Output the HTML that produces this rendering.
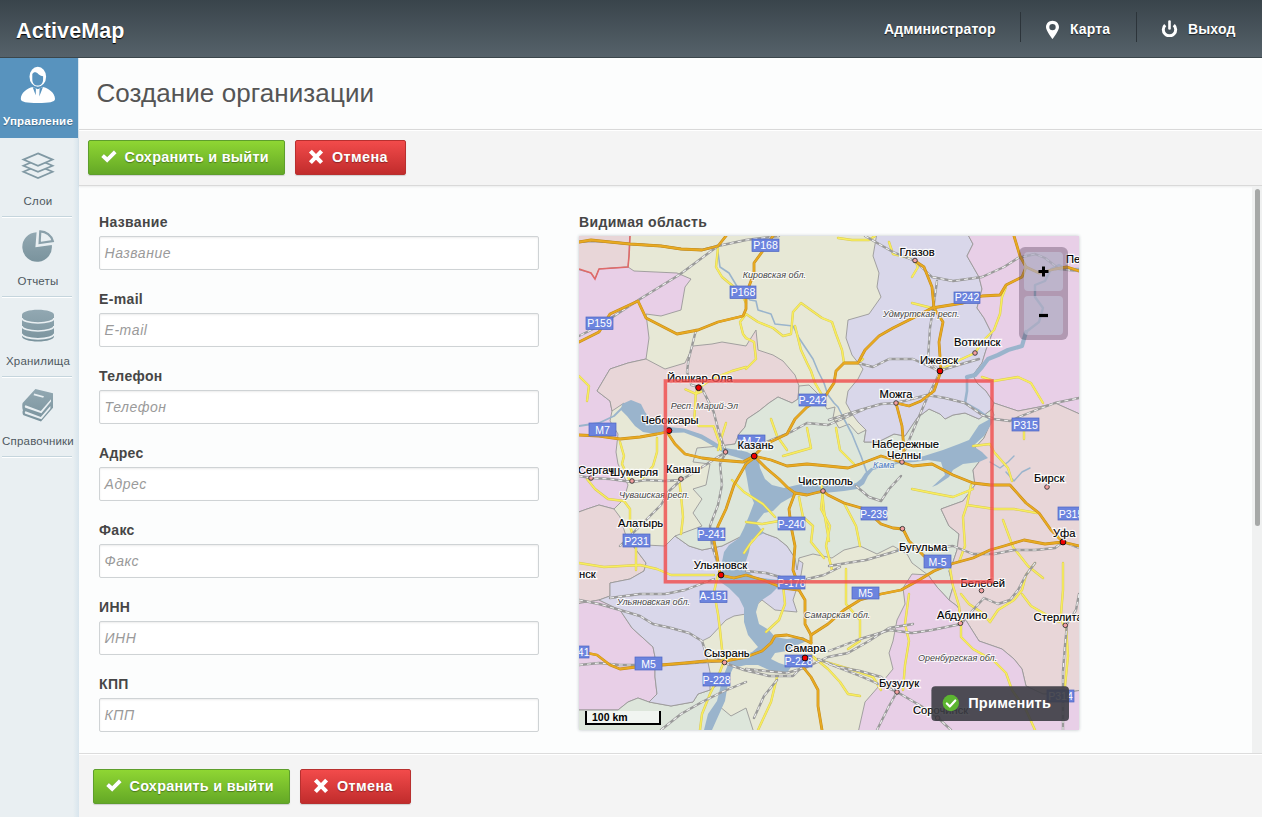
<!DOCTYPE html>
<html><head><meta charset="utf-8">
<style>
*{box-sizing:border-box;margin:0;padding:0}
html,body{width:1262px;height:817px;overflow:hidden;background:#fcfdfd;font-family:"Liberation Sans",sans-serif}
.abs{position:absolute}
#hdr{position:absolute;left:0;top:0;width:1262px;height:58px;background:linear-gradient(#39444b,#56626a 57px,#3b464b 57px);z-index:2}
#logo{position:absolute;left:16px;top:18px;letter-spacing:0.12px;font-weight:bold;font-size:21.5px;color:#fff;text-shadow:0 1px 1px #000;white-space:nowrap;line-height:26px}
.hl{position:absolute;top:23px;letter-spacing:0.15px;font-weight:bold;font-size:14px;color:#fff;text-shadow:0 1px 1px #1a1f23;white-space:nowrap;line-height:12px}
.sep{position:absolute;top:12px;width:1px;height:30px;background:#2c343a}
#side{position:absolute;left:0;top:58px;width:79px;height:759px;background:linear-gradient(to right,#e9eff2 0,#e9eff2 73px,#d8e5ed 79px)}
.sitem{position:absolute;left:0;width:76px;height:80px}
.stxt{position:absolute;left:0;width:76px;text-align:center;font-size:11.5px;letter-spacing:0.2px;color:#4e5860;white-space:nowrap;line-height:12px}
.sline{position:absolute;left:2px;width:70px;height:1px;background:#c5d5dd;box-shadow:0 1px 0 #fff}
#title{position:absolute;left:96.5px;top:79px;letter-spacing:0.08px;font-size:26px;color:#555;white-space:nowrap;line-height:28px}
.tb{position:absolute;left:79px;width:1183px;background:#f4f4f4;box-shadow:inset 0 1px 0 #fff}
.btn{position:absolute;height:35px;border-radius:2px;color:#fff;font-weight:bold;font-size:14.4px;text-shadow:0 1px 1px rgba(0,0,0,.35);white-space:nowrap;box-shadow:0 1px 1px rgba(0,0,0,.15)}
.g{background:linear-gradient(#8fd633,#64a826);border:1px solid #5e9e2c}
.r{background:linear-gradient(#f24b4b,#c12c2c);border:1px solid #b8302f}
.btn span{position:absolute;top:9px;letter-spacing:0.27px;line-height:14px}
.lbl{position:absolute;left:99px;letter-spacing:0.35px;font-weight:bold;font-size:14px;color:#464646;white-space:nowrap;line-height:14px}
.inp{position:absolute;left:99px;width:440px;height:34px;background:#fff;border:1px solid #cfd3d5;border-radius:2px;box-shadow:inset 0 1px 2px rgba(0,0,0,.08)}
.inp span{position:absolute;left:4.5px;letter-spacing:0.55px;top:9px;font-style:italic;font-size:14px;color:#9a9a9a;line-height:14px;white-space:nowrap}
#map{position:absolute;left:579px;top:236px;width:500px;height:494px;overflow:hidden;background:#e9e8d9;box-shadow:0 0 3px rgba(40,60,70,.3)}
#sb{position:absolute;left:1252px;top:186px;width:10px;height:567px;background:#f0f1f1}
#thumb{position:absolute;left:1255px;top:189px;width:5px;height:337px;background:#a6a8a7;border-radius:3px}
</style></head><body>
<div id="hdr">
  <div id="logo">ActiveMap</div>
  <div class="hl" style="left:884px">Администратор</div>
  <div class="sep" style="left:1020px"></div>
  <svg class="abs" style="left:1045px;top:20px" width="15" height="20" viewBox="0 0 15 20"><path d="M7.5 0.8C3.8 0.8 1 3.6 1 7.2c0 3.6 6.5 11.8 6.5 11.8S14 10.8 14 7.2C14 3.6 11.2 0.8 7.5 0.8z M7.5 3.9a3.2 3.2 0 1 1 0 6.4a3.2 3.2 0 1 1 0-6.4z" fill="#fff" fill-rule="evenodd"/></svg>
  <div class="hl" style="left:1070px">Карта</div>
  <div class="sep" style="left:1136px"></div>
  <svg class="abs" style="left:1160px;top:19px" width="19" height="18" viewBox="0 0 19 18"><path d="M5.2 6.2A6.2 6.2 0 1 0 13.8 6.2" fill="none" stroke="#fff" stroke-width="3"/><line x1="9.5" y1="2.5" x2="9.5" y2="9.5" stroke="#fff" stroke-width="2.6" stroke-linecap="round"/></svg>
  <div class="hl" style="left:1188px">Выход</div>
</div>

<div id="side">
  <div class="sitem" style="top:0;width:78px;background:#5893be"></div>
  <svg class="abs" style="left:16px;top:4px" width="44" height="44" viewBox="0 0 44 44">
    <ellipse cx="21.8" cy="14.8" rx="8.3" ry="10" fill="#fff"/>
    <path d="M16.3 12.2C17.6 9.6 20.2 9.8 22.5 12.2C24 13.6 25.8 14 27.1 14.2L27.1 17.2C27.1 21.2 24.9 23.6 21.7 23.6C18.5 23.6 16.3 21.2 16.3 17.2Z" fill="#5893be"/>
    <path d="M4.8 37C4.8 31 11 26.3 16.8 25.1L21.8 27.2L26.8 25.1C32.6 26.3 39 31 39 37C39 40 33 41 21.9 41C10.8 41 4.8 40 4.8 37Z" fill="#fff"/>
    <path d="M16.6 25L19.9 26.6L19.7 33.2Z M27 25L23.6 26.6L23.3 34.6Z" fill="#5893be"/>
  </svg>
  <svg class="abs" style="left:18px;top:90px" width="40" height="32" viewBox="0 0 40 32">
    <g fill="#e9eff2" stroke="#8199a4" stroke-width="1.7" stroke-linejoin="miter">
    <path d="M20 17.6L34.6 23.8L20 30L5.4 23.8Z"/>
    <path d="M20 11.5L34.6 17.7L20 23.9L5.4 17.7Z"/>
    <path d="M20 5.4L34.6 11.6L20 17.8L5.4 11.6Z"/>
    </g>
  </svg>
  <svg class="abs" style="left:18px;top:168px" width="40" height="40" viewBox="0 0 40 40">
    <defs><linearGradient id="sg" x1="0" y1="0" x2="0" y2="1"><stop offset="0" stop-color="#92a8b2"/><stop offset="1" stop-color="#7a939d"/></linearGradient></defs>
    <path d="M17.4 21.3L18.6 6.2A14.8 14.8 0 1 0 33.8 19.1Z" fill="url(#sg)"/>
    <path d="M21.6 17L22.3 5.4A13.2 13.2 0 0 1 34.8 15Z" fill="none" stroke="#8aa0aa" stroke-width="2.2" stroke-linejoin="miter"/>
  </svg>
  <svg class="abs" style="left:18px;top:248px" width="40" height="40" viewBox="0 0 40 40">
    <path d="M4 8.8C4 6 11 3.8 20 3.8C29 3.8 36 6 36 8.8L36 30.6C36 33.4 29 35.6 20 35.6C11 35.6 4 33.4 4 30.6Z" fill="url(#sg)"/>
    <g fill="none" stroke="#e9eff2" stroke-width="1.7">
    <path d="M4 12C4 14.8 11 17 20 17C29 17 36 14.8 36 12"/>
    <path d="M4 20C4 22.8 11 25 20 25C29 25 36 22.8 36 20"/>
    <path d="M4 27.8C4 30.6 11 32.8 20 32.8C29 32.8 36 30.6 36 27.8"/>
    </g>
  </svg>
  <svg class="abs" style="left:18px;top:326px" width="40" height="40" viewBox="0 0 40 40">
    <path d="M4.6 19L17.4 4.9L35 9.3L35 23.8L23 37.6L6.3 31.6C4.3 30.8 4.2 27.4 5 26.2C4.2 25 4.1 20.4 4.6 19Z" fill="url(#sg)"/>
    <path d="M7.6 21.3L22.8 27L33 15.2L33 17.6L23.4 29.2L7.4 23.8C6.6 23.3 6.6 21.6 7.6 21.3Z" fill="#e9eff2"/>
    <path d="M7.6 27.2L22.8 33L32.4 22L32.4 24.4L23.4 35.2L7.4 29.8C6.6 29.3 6.6 27.6 7.6 27.2Z" fill="#e9eff2"/>
    <path d="M16.2 9.6L26 12.2L25.2 13.8L15.6 11.2Z" fill="#e9eff2"/>
  </svg>
  <div class="stxt" style="top:57px;color:#fff;font-weight:bold;text-shadow:0 1px 1px rgba(0,0,0,.3)">Управление</div>
  <div class="stxt" style="top:137px">Слои</div>
  <div class="sline" style="top:158px"></div>
  <div class="stxt" style="top:217px">Отчеты</div>
  <div class="sline" style="top:238px"></div>
  <div class="stxt" style="top:297px">Хранилища</div>
  <div class="sline" style="top:318px"></div>
  <div class="stxt" style="top:377px">Справочники</div>
  <div class="sline" style="top:398px"></div>
</div>

<div id="title">Создание организации</div>

<div class="tb" style="top:129px;height:57px;border-top:1px solid #d9d9d9;border-bottom:1px solid #d9d9d9;box-shadow:inset 0 1px 0 #fff,0 1px 2px rgba(0,0,0,.07)"></div>
<div class="btn g" style="left:88px;top:140px;width:197px"><span style="left:35.5px">Сохранить и выйти</span></div>
<div class="btn r" style="left:295px;top:140px;width:111px"><span style="left:36px;letter-spacing:0.4px">Отмена</span></div>

<svg class="abs" style="left:0px;top:140px" width="1262" height="40" viewBox="0 140 1262 40" overflow="visible"><path d="M103.9 154L107.2 156.9L113.9 150.3L116.7 153.2L107.2 162.8L101.1 157Z" fill="#fff" stroke="rgba(40,90,10,.25)" stroke-width="0.6"/><path d="M310.4 151.1L321.6 162.6M321.6 151.1L310.4 162.6" stroke="#fff" stroke-width="4.1"/></svg>
<div class="lbl" style="top:215px">Название</div>
<div class="inp" style="top:236px"><span>Название</span></div>
<div class="lbl" style="top:292px">E-mail</div>
<div class="inp" style="top:313px"><span>E-mail</span></div>
<div class="lbl" style="top:369px">Телефон</div>
<div class="inp" style="top:390px"><span>Телефон</span></div>
<div class="lbl" style="top:446px">Адрес</div>
<div class="inp" style="top:467px"><span>Адрес</span></div>
<div class="lbl" style="top:523px">Факс</div>
<div class="inp" style="top:544px"><span>Факс</span></div>
<div class="lbl" style="top:600px">ИНН</div>
<div class="inp" style="top:621px"><span>ИНН</span></div>
<div class="lbl" style="top:677px">КПП</div>
<div class="inp" style="top:698px"><span>КПП</span></div>

<div class="lbl" style="left:579px;top:215px">Видимая область</div>
<div id="map"><!--MAP--><svg width="500" height="494" viewBox="0 0 500 494" font-family="Liberation Sans">
<rect width="500" height="494" fill="#e7e8d6"/>
<g stroke="#9a9898" stroke-width="0.9" stroke-linejoin="round">
<path fill="#e8d6d8" d="M-3 -3L51 -3L50 20L49 31L20 33L16 43L12 37L-3 33Z"/>
<path fill="#e8cfe7" d="M-3 33L12 37L16 43L20 33L49 31L55 35L98 37L112 43L106 51L102 74L82 80L67 78L68 86L70 102L67 123L49 127L31 133L18 155L31 165L33 175L31 185L39 198L37 216L39 228L49 249L45 263L35 273L20 269L8 273L-3 277Z"/>
<path fill="#e8d6d8" d="M18 155L31 133L49 127L67 123L86 133L106 127L114 110L133 108L143 106L167 110L177 94L179 114L194 119L204 125L216 139L220 150L219 163L213 167L199 161L190 167L180 175L168 183L166 191L160 198L156 208L141 210L133 208L119 198L102 194L86 192L78 194L61 192L53 179L45 167L33 175L31 165Z"/>
<path fill="#e8d6d8" d="M-3 277L8 273L20 269L35 273L41 281L47 300L55 311L67 327L65 335L51 343L31 347L31 360L20 364L-3 368Z"/>
<path fill="#e8cfe7" d="M-3 368L20 364L41 374L53 392L74 411L76 421L76 441L78 458L70 466L59 462L49 466L39 474L-3 474Z"/>
<path fill="#dde6db" d="M-3 474L39 474L49 466L59 462L70 466L92 470L114 466L119 458L131 454L143 446L140 470L152 480L167 472L175 497L-3 497Z"/>
<path fill="#d9d7ea" d="M47 308L86 310L96 300L110 310L123 314L143 310L167 298L179 294L187 298L198 302L208 310L216 322L224 327L222 339L214 364L218 376L196 374L183 364L167 378L155 380L147 384L131 401L123 405L127 417L131 436L131 454L119 458L114 466L92 470L70 466L78 458L76 441L76 421L74 411L53 392L41 374L20 364L31 360L31 347L51 343L65 335L67 327L55 311Z"/>
<path fill="#dde6db" d="M118 212L141 210L156 208L160 198L166 191L168 183L180 175L190 167L199 161L213 167L219 163L220 150L230 149L240 159L248 173L256 171L254 182L260 192L270 188L279 198L287 194L285 206L299 206L315 198L326 200L338 182L350 173L361 178L366 183L374 179L386 177L400 183L413 173L415 179L405 202L394 214L400 226L394 234L396 249L384 265L362 273L370 290L380 298L378 314L374 326L370 335L374 351L370 364L358 351L349 339L333 327L328 318L314 310L298 318L281 310L265 314L253 322L234 318L220 322L218 334L216 322L208 310L198 302L187 298L179 294L167 298L143 310L123 314L110 310L96 300L123 290L114 277L123 263L114 253L127 249L131 228L114 226Z"/>
<path fill="#d9d7ea" d="M298 -3L388 -3L394 8L388 20L400 41L403 53L398 72L405 82L413 98L407 114L403 127L394 139L398 147L407 155L415 167L413 173L400 183L386 177L374 179L366 183L361 178L350 173L338 182L326 200L315 198L299 206L285 206L287 194L279 186L273 178L267 167L269 155L279 143L284 133L273 119L267 102L269 84L290 78L302 61L298 51L300 37L294 20Z"/>
<path fill="#e8cfe7" d="M388 -3L503 -3L503 179L476 167L460 171L439 175L415 167L407 155L398 147L394 139L403 127L407 114L413 98L405 82L398 72L403 53L400 41L388 20L394 8Z"/>
<path fill="#e8d6d8" d="M415 167L439 175L460 171L476 167L503 179L503 454L480 458L464 458L447 450L443 433L435 423L423 413L400 405L388 386L378 370L370 364L374 351L370 335L374 326L378 314L380 298L370 290L362 273L384 265L396 249L394 234L400 226L394 214L405 202L415 179L413 173Z"/>
<path fill="#e8cfe7" d="M279 497L286 466L300 450L314 433L310 417L314 405L318 384L326 368L324 352L333 338L349 339L358 351L370 364L378 370L388 386L400 405L423 413L435 423L443 433L447 450L464 458L480 458L503 454L503 497Z"/>
</g>
<path fill="none" stroke="#e06a6a" stroke-width="1.6" d="M51 0L50 20L49 31L20 33L16 43L12 37L0 33"/>
<g fill="#9ab4cc"><path d="M43 168L52 164L62 168L66 176L72 184L80 188L90 191L105 192.5L123 198.5L135 205.5L144 211.5L152 213L160 214L168 216L176 220L170 226L160 222L150 219L143 216L134 210L122 203L105 196.5L90 197L76 198L64 196L56 190L48 180L42 174Z"/><path d="M168 219L165 228L168 243L170 255L175 267L170 280L165 292L160 302L150 309L145 316L143 326L143 336L140 345L150 352L160 362L165 372L165 386L169 399L179 411L173 416L163 420L150 426L146 436L142 449L138 465L129 478L125 494L133 494L146 465L150 441L154 432L167 429L179 429L192 435L208 437L212 431L200 427L192 423L196 417L208 415L218 409L228 405L224 401L208 403L196 401L190 394L180 388L177 376L180 366L192 358L200 350L199 344L175 341L165 331L170 316L172 304L185 297L177 287L185 277L194 275L202 267L209 263L216 259L224 259L245 257L265 255L278 253L285 248L289 240L294 234L306 231L322 227L336 226L349 224L362 226L366 239L353 251L358 249L370 241L374 234L384 228L400 226L409 222L403 216L394 210L405 200L413 187L415 179L411 183L400 189L390 204L380 208L364 214L345 220L336 222L322 225L306 229L292 232L286 237L282 243L277 247L269 249L249 249L228 247L218 249L205 252L193 249L186 243L181 232L180 226L176 222Z"/></g>
<g fill="none" stroke="#9ab4cc" stroke-linecap="round" stroke-linejoin="round"><path stroke-width="1.6" d="M138 9L141 31L150 37L159 52L167 60L171 64L177 65L179 74L192 78L196 88L214 90L220 102L228 114L234 123L239 135L245 147L249 159L255 167L259 171L265 183L273 198L277 208L282 220L288 237"/><path stroke-width="2.4" d="M500 33L488 33L480 29L472 33L466 45L456 49L456 61L464 72L460 86L447 96"/><path stroke-width="4.2" d="M447 96L443 110L429 114L419 119L409 123L403 131L396 139L388 141"/><path stroke-width="2.6" d="M388 141L388 155L386 167L400 175L411 183"/><path stroke-width="1.4" d="M411 226L421 232L429 226L435 220"/><path stroke-width="1.4" d="M427 236L435 245L443 236L451 232"/><path stroke-width="1.8" d="M0 190L20 187L35 180L43 172"/></g>
<g fill="none" stroke-linecap="round" stroke-linejoin="round">
<path stroke="#d8c858" stroke-width="2.4" d="M139 12L137 31L143 41L155 51L164 61L167 67"/>
<path stroke="#d8c858" stroke-width="2.4" d="M167 78L179 86L194 92L204 100L212 98L214 76L222 67L243 82L253 86L257 98L263 114L265 127L279 127L284 123"/>
<path stroke="#d8c858" stroke-width="2.4" d="M216 90L222 114L228 127L232 135L236 147L243 159"/>
<path stroke="#d8c858" stroke-width="2.4" d="M259 2L273 4L290 4L296 0"/>
<path stroke="#d8c858" stroke-width="2.4" d="M310 6L314 18L331 22"/>
<path stroke="#d8c858" stroke-width="2.4" d="M167 102L175 106L177 123L167 133"/>
<path stroke="#d8c858" stroke-width="2.4" d="M167 78L161 86L164 98L167 102"/>
<path stroke="#d8c858" stroke-width="2.4" d="M119 151L116.8 157.8L115.4 182.8L119.8 190.1L134.5 190.1L140.3 206.3L141.8 213.6"/>
<path stroke="#d8c858" stroke-width="2.4" d="M106.5 153.4L116.8 157.8L124.2 154.8"/>
<path stroke="#d8c858" stroke-width="2.4" d="M121 151L133 143L153 135L167 131"/>
<path stroke="#d8c858" stroke-width="2.4" d="M360 135L374 127L396 117L403 106L415 94L421 78L423 61L427 51"/>
<path stroke="#d8c858" stroke-width="2.4" d="M403 141L415 145L439 141L452 147L464 167"/>
<path stroke="#d8c858" stroke-width="2.4" d="M333 41L339 31L336 25"/>
<path stroke="#d8c858" stroke-width="2.4" d="M333 67L345 70L353 72"/>
<path stroke="#d8c858" stroke-width="2.4" d="M41 206L45 220L43 228L51 245"/>
<path stroke="#d8c858" stroke-width="2.4" d="M78 202L78 216L74 230L61 245"/>
<path stroke="#d8c858" stroke-width="2.4" d="M100 243L102 259L104 281L102 298"/>
<path stroke="#d8c858" stroke-width="2.4" d="M8 243L16 253L29 263L45 265L51 273L51 290L57 310L57 334"/>
<path stroke="#d8c858" stroke-width="2.4" d="M147 187L143 200L139 214"/>
<path stroke="#d8c858" stroke-width="2.4" d="M192 183L198 200L208 214"/>
<path stroke="#d8c858" stroke-width="2.4" d="M228 192L232 212L218 216L204 220"/>
<path stroke="#d8c858" stroke-width="2.4" d="M257 192L261 214L275 228"/>
<path stroke="#d8c858" stroke-width="2.4" d="M220 261L224 281L234 290L232 306L245 322"/>
<path stroke="#d8c858" stroke-width="2.4" d="M244 255L242 273L251 290L247 310L253 334"/>
<path stroke="#d8c858" stroke-width="2.4" d="M265 267L277 290L281 310"/>
<path stroke="#d8c858" stroke-width="2.4" d="M167 286L183 288L200 285"/>
<path stroke="#d8c858" stroke-width="2.4" d="M394 210L411 208L415 216L429 232L433 245"/>
<path stroke="#d8c858" stroke-width="2.4" d="M392 249L388 269L384 281L386 310L380 326"/>
<path stroke="#d8c858" stroke-width="2.4" d="M388 269L415 273L435 273L458 277"/>
<path stroke="#d8c858" stroke-width="2.4" d="M333 253L353 257L374 261L394 253"/>
<path stroke="#d8c858" stroke-width="2.4" d="M445 194L445 203"/>
<path stroke="#d8c858" stroke-width="2.4" d="M139 339L135 356L139 378L141 394L143 413L145 425"/>
<path stroke="#d8c858" stroke-width="2.4" d="M0 327L25 331L61 329L78 333L92 339L114 339L135 339"/>
<path stroke="#d8c858" stroke-width="2.4" d="M145 425L139 441L131 458L123 478L121 494"/>
<path stroke="#d8c858" stroke-width="2.4" d="M204 349L206 368L200 384L187 396"/>
<path stroke="#d8c858" stroke-width="2.4" d="M267 333L267 368L281 384L281 405L269 413"/>
<path stroke="#d8c858" stroke-width="2.4" d="M232 419L249 433L261 446L269 458L281 460"/>
<path stroke="#d8c858" stroke-width="2.4" d="M236 423L257 429L277 435L294 441L302 454"/>
<path stroke="#d8c858" stroke-width="2.4" d="M324 454L326 429L330 405L326 388L330 358"/>
<path stroke="#d8c858" stroke-width="2.4" d="M198 441L192 466L179 494"/>
<path stroke="#d8c858" stroke-width="2.4" d="M382 388L382 401L394 413L415 425L427 437L433 454L447 474L456 494"/>
<path stroke="#d8c858" stroke-width="2.4" d="M382 358L390 368L402 376L411 386"/>
<path stroke="#d8c858" stroke-width="2.4" d="M411 386L419 374L435 364L443 354L447 339L456 327"/>
<path stroke="#d8c858" stroke-width="2.4" d="M443 358L452 370L466 378L480 386"/>
<path stroke="#d8c858" stroke-width="2.4" d="M484 327L484 354L482 378L484 388"/>
<path stroke="#d8c858" stroke-width="2.4" d="M370 327L374 350L380 370L382 388"/>
<path stroke="#d8c858" stroke-width="2.4" d="M424 284L434 311L449 330L464 342"/>
<path stroke="#d8c858" stroke-width="2.4" d="M153 244L165 256L184 268L196 281"/>
<path stroke="#d8c858" stroke-width="2.4" d="M184 293L171 308L165 317"/>
<path stroke="#d8c858" stroke-width="2.4" d="M242 244L245 275L250 305"/>
<path stroke="#d8c858" stroke-width="2.4" d="M487 390L489 420L486 450"/>
<path stroke="#d8c858" stroke-width="2.4" d="M0 140L10 150L8 165"/>
<path stroke="#f8ee5e" stroke-width="1.5" d="M139 12L137 31L143 41L155 51L164 61L167 67"/>
<path stroke="#f8ee5e" stroke-width="1.5" d="M167 78L179 86L194 92L204 100L212 98L214 76L222 67L243 82L253 86L257 98L263 114L265 127L279 127L284 123"/>
<path stroke="#f8ee5e" stroke-width="1.5" d="M216 90L222 114L228 127L232 135L236 147L243 159"/>
<path stroke="#f8ee5e" stroke-width="1.5" d="M259 2L273 4L290 4L296 0"/>
<path stroke="#f8ee5e" stroke-width="1.5" d="M310 6L314 18L331 22"/>
<path stroke="#f8ee5e" stroke-width="1.5" d="M167 102L175 106L177 123L167 133"/>
<path stroke="#f8ee5e" stroke-width="1.5" d="M167 78L161 86L164 98L167 102"/>
<path stroke="#f8ee5e" stroke-width="1.5" d="M119 151L116.8 157.8L115.4 182.8L119.8 190.1L134.5 190.1L140.3 206.3L141.8 213.6"/>
<path stroke="#f8ee5e" stroke-width="1.5" d="M106.5 153.4L116.8 157.8L124.2 154.8"/>
<path stroke="#f8ee5e" stroke-width="1.5" d="M121 151L133 143L153 135L167 131"/>
<path stroke="#f8ee5e" stroke-width="1.5" d="M360 135L374 127L396 117L403 106L415 94L421 78L423 61L427 51"/>
<path stroke="#f8ee5e" stroke-width="1.5" d="M403 141L415 145L439 141L452 147L464 167"/>
<path stroke="#f8ee5e" stroke-width="1.5" d="M333 41L339 31L336 25"/>
<path stroke="#f8ee5e" stroke-width="1.5" d="M333 67L345 70L353 72"/>
<path stroke="#f8ee5e" stroke-width="1.5" d="M41 206L45 220L43 228L51 245"/>
<path stroke="#f8ee5e" stroke-width="1.5" d="M78 202L78 216L74 230L61 245"/>
<path stroke="#f8ee5e" stroke-width="1.5" d="M100 243L102 259L104 281L102 298"/>
<path stroke="#f8ee5e" stroke-width="1.5" d="M8 243L16 253L29 263L45 265L51 273L51 290L57 310L57 334"/>
<path stroke="#f8ee5e" stroke-width="1.5" d="M147 187L143 200L139 214"/>
<path stroke="#f8ee5e" stroke-width="1.5" d="M192 183L198 200L208 214"/>
<path stroke="#f8ee5e" stroke-width="1.5" d="M228 192L232 212L218 216L204 220"/>
<path stroke="#f8ee5e" stroke-width="1.5" d="M257 192L261 214L275 228"/>
<path stroke="#f8ee5e" stroke-width="1.5" d="M220 261L224 281L234 290L232 306L245 322"/>
<path stroke="#f8ee5e" stroke-width="1.5" d="M244 255L242 273L251 290L247 310L253 334"/>
<path stroke="#f8ee5e" stroke-width="1.5" d="M265 267L277 290L281 310"/>
<path stroke="#f8ee5e" stroke-width="1.5" d="M167 286L183 288L200 285"/>
<path stroke="#f8ee5e" stroke-width="1.5" d="M394 210L411 208L415 216L429 232L433 245"/>
<path stroke="#f8ee5e" stroke-width="1.5" d="M392 249L388 269L384 281L386 310L380 326"/>
<path stroke="#f8ee5e" stroke-width="1.5" d="M388 269L415 273L435 273L458 277"/>
<path stroke="#f8ee5e" stroke-width="1.5" d="M333 253L353 257L374 261L394 253"/>
<path stroke="#f8ee5e" stroke-width="1.5" d="M445 194L445 203"/>
<path stroke="#f8ee5e" stroke-width="1.5" d="M139 339L135 356L139 378L141 394L143 413L145 425"/>
<path stroke="#f8ee5e" stroke-width="1.5" d="M0 327L25 331L61 329L78 333L92 339L114 339L135 339"/>
<path stroke="#f8ee5e" stroke-width="1.5" d="M145 425L139 441L131 458L123 478L121 494"/>
<path stroke="#f8ee5e" stroke-width="1.5" d="M204 349L206 368L200 384L187 396"/>
<path stroke="#f8ee5e" stroke-width="1.5" d="M267 333L267 368L281 384L281 405L269 413"/>
<path stroke="#f8ee5e" stroke-width="1.5" d="M232 419L249 433L261 446L269 458L281 460"/>
<path stroke="#f8ee5e" stroke-width="1.5" d="M236 423L257 429L277 435L294 441L302 454"/>
<path stroke="#f8ee5e" stroke-width="1.5" d="M324 454L326 429L330 405L326 388L330 358"/>
<path stroke="#f8ee5e" stroke-width="1.5" d="M198 441L192 466L179 494"/>
<path stroke="#f8ee5e" stroke-width="1.5" d="M382 388L382 401L394 413L415 425L427 437L433 454L447 474L456 494"/>
<path stroke="#f8ee5e" stroke-width="1.5" d="M382 358L390 368L402 376L411 386"/>
<path stroke="#f8ee5e" stroke-width="1.5" d="M411 386L419 374L435 364L443 354L447 339L456 327"/>
<path stroke="#f8ee5e" stroke-width="1.5" d="M443 358L452 370L466 378L480 386"/>
<path stroke="#f8ee5e" stroke-width="1.5" d="M484 327L484 354L482 378L484 388"/>
<path stroke="#f8ee5e" stroke-width="1.5" d="M370 327L374 350L380 370L382 388"/>
<path stroke="#f8ee5e" stroke-width="1.5" d="M424 284L434 311L449 330L464 342"/>
<path stroke="#f8ee5e" stroke-width="1.5" d="M153 244L165 256L184 268L196 281"/>
<path stroke="#f8ee5e" stroke-width="1.5" d="M184 293L171 308L165 317"/>
<path stroke="#f8ee5e" stroke-width="1.5" d="M242 244L245 275L250 305"/>
<path stroke="#f8ee5e" stroke-width="1.5" d="M487 390L489 420L486 450"/>
<path stroke="#f8ee5e" stroke-width="1.5" d="M0 140L10 150L8 165"/>
<path stroke="#9a9a9a" stroke-width="2.4" d="M0 6L12 5L31 6L51 8L82 10L102 13L123 14L139 10L167 4L200 0"/>
<path stroke="#9a9a9a" stroke-width="2.4" d="M139 10L100 39L61 63L20 90L0 100"/>
<path stroke="#9a9a9a" stroke-width="2.4" d="M117 94L112 114L109.5 124L108 135.8L112.4 149L122.7 151.9L134.5 175.4L140.3 197.5L146.2 213.6"/>
<path stroke="#9a9a9a" stroke-width="2.4" d="M175 220L187 206L212 196L228 187L249 189L263 183L286 173"/>
<path stroke="#9a9a9a" stroke-width="2.4" d="M147 216L131 226L114 237L102 244L86 245L67 244L53 246L31 243L12 242L0 240"/>
<path stroke="#9a9a9a" stroke-width="2.4" d="M102 244L90 255L82 269L70 281L57 294L41 310"/>
<path stroke="#9a9a9a" stroke-width="2.4" d="M147 216L141 228L143 249L139 269L131 290L133 310L138 325L142 339"/>
<path stroke="#9a9a9a" stroke-width="2.4" d="M286 0L300 8L314 16L336 25L353 41L374 45L403 41L425 31L439 22L456 18L466 22L480 33L500 35"/>
<path stroke="#9a9a9a" stroke-width="2.4" d="M358 45L355 67L351 92L349 123L360 135"/>
<path stroke="#9a9a9a" stroke-width="2.4" d="M279 127L294 131L310 123L334 123L360 135L386 127L400 123"/>
<path stroke="#9a9a9a" stroke-width="2.4" d="M250 184L281 174L302 168L317 167L348 159L366 162L386 167L403 179L415 183L431 185L445 179L460 173L476 167L500 162"/>
<path stroke="#9a9a9a" stroke-width="2.4" d="M360 138L348 162L336 190L326 214"/>
<path stroke="#9a9a9a" stroke-width="2.4" d="M0 364L20 368L41 374L61 380L74 388L92 392L110 397L123 405L127 417L143 425"/>
<path stroke="#9a9a9a" stroke-width="2.4" d="M31 362L61 358L86 358L106 354L135 343"/>
<path stroke="#9a9a9a" stroke-width="2.4" d="M0 429L20 427L41 429L61 429L86 429L114 427L143 425"/>
<path stroke="#9a9a9a" stroke-width="2.4" d="M82 494L102 478L123 466L143 456L167 446"/>
<path stroke="#9a9a9a" stroke-width="2.4" d="M167 433L187 435L208 437L228 431L249 421L269 417L290 405L310 392L334 388"/>
<path stroke="#9a9a9a" stroke-width="2.4" d="M239 423L259 431L281 435L302 441L318 456"/>
<path stroke="#9a9a9a" stroke-width="2.4" d="M198 444L185 460L175 482"/>
<path stroke="#9a9a9a" stroke-width="2.4" d="M167 335L187 337L208 343"/>
<path stroke="#9a9a9a" stroke-width="2.4" d="M228 343L245 339L261 331"/>
<path stroke="#9a9a9a" stroke-width="2.4" d="M250 330L268 327L287 324L311 317L330 311L350 312L374 310L394 318L415 318L435 314L456 314L476 312L484 306L500 312"/>
<path stroke="#9a9a9a" stroke-width="2.4" d="M250 415L281 403L311 394L333 397L353 394L382 388L394 374L405 362L419 368L431 364L439 354L447 339L456 327"/>
<path stroke="#9a9a9a" stroke-width="2.4" d="M250 428L281 440L318 456L342 470L359 482L372 494"/>
<path stroke="#9a9a9a" stroke-width="2.4" d="M318 456L310 470L298 494"/>
<path stroke="#9a9a9a" stroke-width="2.4" d="M500 358L497 374L488 388L486 409L484 435L484 494"/>
<path stroke="#9a9a9a" stroke-width="2.4" d="M277 250L290 261L302 265L310 253L322 240"/>
<path stroke="#9a9a9a" stroke-width="2.4" d="M146 427L165 434L190 440L214 440L226 428"/>
<path stroke="#f0f0f0" stroke-width="1.1" stroke-dasharray="4 4" stroke-linecap="butt" d="M0 6L12 5L31 6L51 8L82 10L102 13L123 14L139 10L167 4L200 0"/>
<path stroke="#f0f0f0" stroke-width="1.1" stroke-dasharray="4 4" stroke-linecap="butt" d="M139 10L100 39L61 63L20 90L0 100"/>
<path stroke="#f0f0f0" stroke-width="1.1" stroke-dasharray="4 4" stroke-linecap="butt" d="M117 94L112 114L109.5 124L108 135.8L112.4 149L122.7 151.9L134.5 175.4L140.3 197.5L146.2 213.6"/>
<path stroke="#f0f0f0" stroke-width="1.1" stroke-dasharray="4 4" stroke-linecap="butt" d="M175 220L187 206L212 196L228 187L249 189L263 183L286 173"/>
<path stroke="#f0f0f0" stroke-width="1.1" stroke-dasharray="4 4" stroke-linecap="butt" d="M147 216L131 226L114 237L102 244L86 245L67 244L53 246L31 243L12 242L0 240"/>
<path stroke="#f0f0f0" stroke-width="1.1" stroke-dasharray="4 4" stroke-linecap="butt" d="M102 244L90 255L82 269L70 281L57 294L41 310"/>
<path stroke="#f0f0f0" stroke-width="1.1" stroke-dasharray="4 4" stroke-linecap="butt" d="M147 216L141 228L143 249L139 269L131 290L133 310L138 325L142 339"/>
<path stroke="#f0f0f0" stroke-width="1.1" stroke-dasharray="4 4" stroke-linecap="butt" d="M286 0L300 8L314 16L336 25L353 41L374 45L403 41L425 31L439 22L456 18L466 22L480 33L500 35"/>
<path stroke="#f0f0f0" stroke-width="1.1" stroke-dasharray="4 4" stroke-linecap="butt" d="M358 45L355 67L351 92L349 123L360 135"/>
<path stroke="#f0f0f0" stroke-width="1.1" stroke-dasharray="4 4" stroke-linecap="butt" d="M279 127L294 131L310 123L334 123L360 135L386 127L400 123"/>
<path stroke="#f0f0f0" stroke-width="1.1" stroke-dasharray="4 4" stroke-linecap="butt" d="M250 184L281 174L302 168L317 167L348 159L366 162L386 167L403 179L415 183L431 185L445 179L460 173L476 167L500 162"/>
<path stroke="#f0f0f0" stroke-width="1.1" stroke-dasharray="4 4" stroke-linecap="butt" d="M360 138L348 162L336 190L326 214"/>
<path stroke="#f0f0f0" stroke-width="1.1" stroke-dasharray="4 4" stroke-linecap="butt" d="M0 364L20 368L41 374L61 380L74 388L92 392L110 397L123 405L127 417L143 425"/>
<path stroke="#f0f0f0" stroke-width="1.1" stroke-dasharray="4 4" stroke-linecap="butt" d="M31 362L61 358L86 358L106 354L135 343"/>
<path stroke="#f0f0f0" stroke-width="1.1" stroke-dasharray="4 4" stroke-linecap="butt" d="M0 429L20 427L41 429L61 429L86 429L114 427L143 425"/>
<path stroke="#f0f0f0" stroke-width="1.1" stroke-dasharray="4 4" stroke-linecap="butt" d="M82 494L102 478L123 466L143 456L167 446"/>
<path stroke="#f0f0f0" stroke-width="1.1" stroke-dasharray="4 4" stroke-linecap="butt" d="M167 433L187 435L208 437L228 431L249 421L269 417L290 405L310 392L334 388"/>
<path stroke="#f0f0f0" stroke-width="1.1" stroke-dasharray="4 4" stroke-linecap="butt" d="M239 423L259 431L281 435L302 441L318 456"/>
<path stroke="#f0f0f0" stroke-width="1.1" stroke-dasharray="4 4" stroke-linecap="butt" d="M198 444L185 460L175 482"/>
<path stroke="#f0f0f0" stroke-width="1.1" stroke-dasharray="4 4" stroke-linecap="butt" d="M167 335L187 337L208 343"/>
<path stroke="#f0f0f0" stroke-width="1.1" stroke-dasharray="4 4" stroke-linecap="butt" d="M228 343L245 339L261 331"/>
<path stroke="#f0f0f0" stroke-width="1.1" stroke-dasharray="4 4" stroke-linecap="butt" d="M250 330L268 327L287 324L311 317L330 311L350 312L374 310L394 318L415 318L435 314L456 314L476 312L484 306L500 312"/>
<path stroke="#f0f0f0" stroke-width="1.1" stroke-dasharray="4 4" stroke-linecap="butt" d="M250 415L281 403L311 394L333 397L353 394L382 388L394 374L405 362L419 368L431 364L439 354L447 339L456 327"/>
<path stroke="#f0f0f0" stroke-width="1.1" stroke-dasharray="4 4" stroke-linecap="butt" d="M250 428L281 440L318 456L342 470L359 482L372 494"/>
<path stroke="#f0f0f0" stroke-width="1.1" stroke-dasharray="4 4" stroke-linecap="butt" d="M318 456L310 470L298 494"/>
<path stroke="#f0f0f0" stroke-width="1.1" stroke-dasharray="4 4" stroke-linecap="butt" d="M500 358L497 374L488 388L486 409L484 435L484 494"/>
<path stroke="#f0f0f0" stroke-width="1.1" stroke-dasharray="4 4" stroke-linecap="butt" d="M277 250L290 261L302 265L310 253L322 240"/>
<path stroke="#f0f0f0" stroke-width="1.1" stroke-dasharray="4 4" stroke-linecap="butt" d="M146 427L165 434L190 440L214 440L226 428"/>
<path stroke="#c48a18" stroke-width="2.8" d="M0 6L12 4L31 6L51 8L82 10L102 13L123 14L139 10L147 0"/>
<path stroke="#c48a18" stroke-width="2.8" d="M194 0L183 16L175 27L175 37L169 53L167 61L167 73L164 80L139 86L119 94L98 98L67 82L59 65L31 78L20 96L0 106"/>
<path stroke="#c48a18" stroke-width="2.8" d="M0 199L20 200L41 203L61 201L78 198L88 196L96 208L106 218L123 222L139 224L164 226L175 220"/>
<path stroke="#c48a18" stroke-width="2.8" d="M175 220L192 224L208 230L228 228L249 230L269 232L281 228L302 220L322 226L334 230L353 228L374 239L394 247L411 249L431 249L447 267L460 277L472 294L484 306"/>
<path stroke="#c48a18" stroke-width="2.8" d="M175 220L187 208L208 198L216 183L228 171L247 159L255 147L257 135L265 127L279 127L286 114L300 100L314 92L334 82L353 72L384 67L403 60L421 59L427 49L443 41L447 31L441 20L435 0"/>
<path stroke="#c48a18" stroke-width="2.8" d="M447 31L460 37L476 33L488 31L500 35"/>
<path stroke="#c48a18" stroke-width="2.8" d="M336 25L345 31L353 51L355 72L364 86L360 106L362 135L355 155L342 165L330 170L317 167"/>
<path stroke="#c48a18" stroke-width="2.8" d="M317 167L323 190L325 214L323 226"/>
<path stroke="#c48a18" stroke-width="2.8" d="M175 220L187 232L200 243L208 251L216 257L228 259L244 255L249 259L265 267L286 273L302 288L314 292L324 293L330 305L345 320L355 328"/>
<path stroke="#c48a18" stroke-width="2.8" d="M216 257L210 273L212 290L216 310L214 334L218 345L220 354"/>
<path stroke="#c48a18" stroke-width="2.8" d="M141 339L155 342L167 339L187 345L204 352L220 354L226 364L226 388L232 399L232 407"/>
<path stroke="#c48a18" stroke-width="2.8" d="M232 399L249 388L265 374L281 364L302 358L322 354L340 344L355 335L372 328L394 322L411 314L425 310L445 304L466 308L484 306L500 310"/>
<path stroke="#c48a18" stroke-width="2.8" d="M0 415L8 417L18 419L31 429L41 433L57 431L82 429L106 427L127 425L146 425L167 421L183 415L192 407L196 400L208 399L224 403L232 407"/>
<path stroke="#c48a18" stroke-width="2.8" d="M224 431L232 441L239 454L239 470L243 494"/>
<path stroke="#c48a18" stroke-width="2.8" d="M175 222L167 228L155 249L147 273L139 290L135 305L138 320L141 339"/>
<path stroke="#e8aa22" stroke-width="1.8" d="M0 6L12 4L31 6L51 8L82 10L102 13L123 14L139 10L147 0"/>
<path stroke="#e8aa22" stroke-width="1.8" d="M194 0L183 16L175 27L175 37L169 53L167 61L167 73L164 80L139 86L119 94L98 98L67 82L59 65L31 78L20 96L0 106"/>
<path stroke="#e8aa22" stroke-width="1.8" d="M0 199L20 200L41 203L61 201L78 198L88 196L96 208L106 218L123 222L139 224L164 226L175 220"/>
<path stroke="#e8aa22" stroke-width="1.8" d="M175 220L192 224L208 230L228 228L249 230L269 232L281 228L302 220L322 226L334 230L353 228L374 239L394 247L411 249L431 249L447 267L460 277L472 294L484 306"/>
<path stroke="#e8aa22" stroke-width="1.8" d="M175 220L187 208L208 198L216 183L228 171L247 159L255 147L257 135L265 127L279 127L286 114L300 100L314 92L334 82L353 72L384 67L403 60L421 59L427 49L443 41L447 31L441 20L435 0"/>
<path stroke="#e8aa22" stroke-width="1.8" d="M447 31L460 37L476 33L488 31L500 35"/>
<path stroke="#e8aa22" stroke-width="1.8" d="M336 25L345 31L353 51L355 72L364 86L360 106L362 135L355 155L342 165L330 170L317 167"/>
<path stroke="#e8aa22" stroke-width="1.8" d="M317 167L323 190L325 214L323 226"/>
<path stroke="#e8aa22" stroke-width="1.8" d="M175 220L187 232L200 243L208 251L216 257L228 259L244 255L249 259L265 267L286 273L302 288L314 292L324 293L330 305L345 320L355 328"/>
<path stroke="#e8aa22" stroke-width="1.8" d="M216 257L210 273L212 290L216 310L214 334L218 345L220 354"/>
<path stroke="#e8aa22" stroke-width="1.8" d="M141 339L155 342L167 339L187 345L204 352L220 354L226 364L226 388L232 399L232 407"/>
<path stroke="#e8aa22" stroke-width="1.8" d="M232 399L249 388L265 374L281 364L302 358L322 354L340 344L355 335L372 328L394 322L411 314L425 310L445 304L466 308L484 306L500 310"/>
<path stroke="#e8aa22" stroke-width="1.8" d="M0 415L8 417L18 419L31 429L41 433L57 431L82 429L106 427L127 425L146 425L167 421L183 415L192 407L196 400L208 399L224 403L232 407"/>
<path stroke="#e8aa22" stroke-width="1.8" d="M224 431L232 441L239 454L239 470L243 494"/>
<path stroke="#e8aa22" stroke-width="1.8" d="M175 222L167 228L155 249L147 273L139 290L135 305L138 320L141 339"/>
</g>
<rect x="173" y="3" width="27" height="12.5" fill="#6c84de" stroke="#4e66c4" stroke-width="0.7"/>
<text x="186.5" y="13.2" text-anchor="middle" font-size="10.5" fill="#fff">P168</text>
<rect x="151" y="50" width="26" height="12.5" fill="#6c84de" stroke="#4e66c4" stroke-width="0.7"/>
<text x="164.0" y="60.2" text-anchor="middle" font-size="10.5" fill="#fff">P168</text>
<rect x="7" y="81" width="27" height="12.5" fill="#6c84de" stroke="#4e66c4" stroke-width="0.7"/>
<text x="20.5" y="91.2" text-anchor="middle" font-size="10.5" fill="#fff">P159</text>
<rect x="375" y="56" width="26" height="11.5" fill="#6c84de" stroke="#4e66c4" stroke-width="0.7"/>
<text x="388.0" y="65.2" text-anchor="middle" font-size="10.5" fill="#fff">P242</text>
<rect x="220" y="158" width="27" height="12" fill="#6c84de" stroke="#4e66c4" stroke-width="0.7"/>
<text x="233.5" y="167.7" text-anchor="middle" font-size="10.5" fill="#fff">P-242</text>
<rect x="10" y="187" width="27" height="13" fill="#6c84de" stroke="#4e66c4" stroke-width="0.7"/>
<text x="23.5" y="197.7" text-anchor="middle" font-size="10.5" fill="#fff">M7</text>
<rect x="159" y="199" width="27" height="12" fill="#6c84de" stroke="#4e66c4" stroke-width="0.7"/>
<text x="172.5" y="208.7" text-anchor="middle" font-size="10.5" fill="#fff">M-7</text>
<rect x="433" y="182" width="27" height="13" fill="#6c84de" stroke="#4e66c4" stroke-width="0.7"/>
<text x="446.5" y="192.7" text-anchor="middle" font-size="10.5" fill="#fff">P315</text>
<rect x="44" y="298" width="27" height="13" fill="#6c84de" stroke="#4e66c4" stroke-width="0.7"/>
<text x="57.5" y="308.7" text-anchor="middle" font-size="10.5" fill="#fff">P231</text>
<rect x="119" y="292" width="27" height="12.5" fill="#6c84de" stroke="#4e66c4" stroke-width="0.7"/>
<text x="132.5" y="302.2" text-anchor="middle" font-size="10.5" fill="#fff">P-241</text>
<rect x="199" y="281" width="27" height="13" fill="#6c84de" stroke="#4e66c4" stroke-width="0.7"/>
<text x="212.5" y="291.7" text-anchor="middle" font-size="10.5" fill="#fff">P-240</text>
<rect x="199" y="340" width="27" height="13" fill="#6c84de" stroke="#4e66c4" stroke-width="0.7"/>
<text x="212.5" y="350.7" text-anchor="middle" font-size="10.5" fill="#fff">P-178</text>
<rect x="121" y="355" width="27" height="11.5" fill="#6c84de" stroke="#4e66c4" stroke-width="0.7"/>
<text x="134.5" y="364.2" text-anchor="middle" font-size="10.5" fill="#fff">A-151</text>
<rect x="56" y="421" width="27" height="13" fill="#6c84de" stroke="#4e66c4" stroke-width="0.7"/>
<text x="69.5" y="431.7" text-anchor="middle" font-size="10.5" fill="#fff">M5</text>
<rect x="124" y="437" width="27" height="13" fill="#6c84de" stroke="#4e66c4" stroke-width="0.7"/>
<text x="137.5" y="447.7" text-anchor="middle" font-size="10.5" fill="#fff">P-228</text>
<rect x="206" y="419" width="27" height="12" fill="#6c84de" stroke="#4e66c4" stroke-width="0.7"/>
<text x="219.5" y="428.7" text-anchor="middle" font-size="10.5" fill="#fff">P-228</text>
<rect x="282" y="271" width="26" height="13" fill="#6c84de" stroke="#4e66c4" stroke-width="0.7"/>
<text x="295.0" y="281.7" text-anchor="middle" font-size="10.5" fill="#fff">P-239</text>
<rect x="345" y="319" width="27" height="13" fill="#6c84de" stroke="#4e66c4" stroke-width="0.7"/>
<text x="358.5" y="329.7" text-anchor="middle" font-size="10.5" fill="#fff">M-5</text>
<rect x="273" y="351" width="27" height="12" fill="#6c84de" stroke="#4e66c4" stroke-width="0.7"/>
<text x="286.5" y="360.7" text-anchor="middle" font-size="10.5" fill="#fff">M5</text>
<rect x="479" y="271" width="26" height="13" fill="#6c84de" stroke="#4e66c4" stroke-width="0.7"/>
<text x="492.0" y="281.7" text-anchor="middle" font-size="10.5" fill="#fff">P315</text>
<rect x="468" y="454" width="27" height="12" fill="#6c84de" stroke="#4e66c4" stroke-width="0.7"/>
<text x="481.5" y="463.7" text-anchor="middle" font-size="10.5" fill="#fff">P314</text>
<rect x="-17" y="410" width="27" height="12" fill="#6c84de" stroke="#4e66c4" stroke-width="0.7"/>
<text x="-3.5" y="419.7" text-anchor="middle" font-size="10.5" fill="#fff">P-241</text>
<text x="294" y="231.5" font-size="9" font-style="italic" fill="#4a78c0" stroke="#fff" stroke-width="1.5" stroke-opacity="0.6" paint-order="stroke">Кама</text>
<text x="163.7" y="41.9" font-size="9" font-style="italic" fill="#444" stroke="#fff" stroke-width="2" stroke-opacity="0.8" paint-order="stroke">Кировская обл.</text>
<text x="304" y="81.4" font-size="9" font-style="italic" fill="#444" stroke="#fff" stroke-width="2" stroke-opacity="0.8" paint-order="stroke">Удмуртская респ.</text>
<text x="91.8" y="172.9" font-size="9" font-style="italic" fill="#444" stroke="#fff" stroke-width="2" stroke-opacity="0.8" paint-order="stroke">Респ. Марий-Эл</text>
<text x="40" y="262" font-size="9" font-style="italic" fill="#444" stroke="#fff" stroke-width="2" stroke-opacity="0.8" paint-order="stroke">Чувашская респ.</text>
<text x="38" y="368.9" font-size="9" font-style="italic" fill="#444" stroke="#fff" stroke-width="2" stroke-opacity="0.8" paint-order="stroke">Ульяновская обл.</text>
<text x="225" y="382" font-size="9" font-style="italic" fill="#444" stroke="#fff" stroke-width="2" stroke-opacity="0.8" paint-order="stroke">Самарская обл.</text>
<text x="339" y="424.7" font-size="9" font-style="italic" fill="#444" stroke="#fff" stroke-width="2" stroke-opacity="0.8" paint-order="stroke">Оренбургская обл.</text>
<circle cx="336" cy="24.5" r="2.3" fill="#f4a0a0" stroke="#333" stroke-width="0.9"/>
<circle cx="396" cy="117" r="2.3" fill="#f4a0a0" stroke="#333" stroke-width="0.9"/>
<circle cx="361" cy="135" r="2.9" fill="#f00000" stroke="#111" stroke-width="1"/>
<circle cx="317" cy="167" r="2.3" fill="#f4a0a0" stroke="#333" stroke-width="0.9"/>
<circle cx="323" cy="226" r="2.3" fill="#f4a0a0" stroke="#333" stroke-width="0.9"/>
<circle cx="468" cy="251" r="2.3" fill="#f4a0a0" stroke="#333" stroke-width="0.9"/>
<circle cx="119.6" cy="151.7" r="2.9" fill="#f00000" stroke="#111" stroke-width="1"/>
<circle cx="90" cy="194.6" r="2.9" fill="#f00000" stroke="#111" stroke-width="1"/>
<circle cx="175.2" cy="220.1" r="2.9" fill="#f00000" stroke="#111" stroke-width="1"/>
<circle cx="146.5" cy="216" r="2.3" fill="#f4a0a0" stroke="#333" stroke-width="0.9"/>
<circle cx="12" cy="242" r="2.3" fill="#f4a0a0" stroke="#333" stroke-width="0.9"/>
<circle cx="53" cy="245" r="2.3" fill="#f4a0a0" stroke="#333" stroke-width="0.9"/>
<circle cx="102" cy="243" r="2.3" fill="#f4a0a0" stroke="#333" stroke-width="0.9"/>
<circle cx="244" cy="255" r="2.3" fill="#f4a0a0" stroke="#333" stroke-width="0.9"/>
<circle cx="142" cy="339" r="2.9" fill="#f00000" stroke="#111" stroke-width="1"/>
<circle cx="145.5" cy="426.5" r="2.3" fill="#f4a0a0" stroke="#333" stroke-width="0.9"/>
<circle cx="226" cy="422" r="2.9" fill="#f00000" stroke="#111" stroke-width="1"/>
<circle cx="323.4" cy="292.7" r="2.3" fill="#f4a0a0" stroke="#333" stroke-width="0.9"/>
<circle cx="402.5" cy="354.6" r="2.3" fill="#f4a0a0" stroke="#333" stroke-width="0.9"/>
<circle cx="381.4" cy="387.3" r="2.3" fill="#f4a0a0" stroke="#333" stroke-width="0.9"/>
<circle cx="486.3" cy="389.3" r="2.3" fill="#f4a0a0" stroke="#333" stroke-width="0.9"/>
<circle cx="484" cy="306" r="2.9" fill="#f00000" stroke="#111" stroke-width="1"/>
<circle cx="318" cy="456" r="2.3" fill="#f4a0a0" stroke="#333" stroke-width="0.9"/>
<circle cx="358.6" cy="482" r="2.3" fill="#f4a0a0" stroke="#333" stroke-width="0.9"/>
<text x="320.4" y="20.2" font-size="11.2" fill="#000" stroke="#fff" stroke-width="2.4" stroke-opacity="0.9">Глазов</text>
<text x="375" y="110.4" font-size="11.2" fill="#000" stroke="#fff" stroke-width="2.4" stroke-opacity="0.9">Воткинск</text>
<text x="341" y="127.8" font-size="11.2" fill="#000" stroke="#fff" stroke-width="2.4" stroke-opacity="0.9">Ижевск</text>
<text x="300.5" y="161.6" font-size="11.2" fill="#000" stroke="#fff" stroke-width="2.4" stroke-opacity="0.9">Можга</text>
<text x="293" y="212.4" font-size="11.2" fill="#000" stroke="#fff" stroke-width="2.4" stroke-opacity="0.9">Набережные</text>
<text x="308" y="222.6" font-size="11.2" fill="#000" stroke="#fff" stroke-width="2.4" stroke-opacity="0.9">Челны</text>
<text x="455" y="245.7" font-size="11.2" fill="#000" stroke="#fff" stroke-width="2.4" stroke-opacity="0.9">Бирск</text>
<text x="487" y="26.6" font-size="11.2" fill="#000" stroke="#fff" stroke-width="2.4" stroke-opacity="0.9">Пе</text>
<text x="87.9" y="146.2" font-size="11.2" fill="#000" stroke="#fff" stroke-width="2.4" stroke-opacity="0.9">Йошкар-Ола</text>
<text x="62.3" y="188.3" font-size="11.2" fill="#000" stroke="#fff" stroke-width="2.4" stroke-opacity="0.9">Чебоксары</text>
<text x="158.5" y="213" font-size="11.2" fill="#000" stroke="#fff" stroke-width="2.4" stroke-opacity="0.9">Казань</text>
<text x="0" y="0" font-size="11.2" fill="#000" stroke="#fff" stroke-width="2.4" stroke-opacity="0.9"></text>
<text x="-1" y="237.5" font-size="11.2" fill="#000" stroke="#fff" stroke-width="2.4" stroke-opacity="0.9">Сергач</text>
<text x="31" y="240" font-size="11.2" fill="#000" stroke="#fff" stroke-width="2.4" stroke-opacity="0.9">Шумерля</text>
<text x="87" y="236.5" font-size="11.2" fill="#000" stroke="#fff" stroke-width="2.4" stroke-opacity="0.9">Канаш</text>
<text x="219" y="248.8" font-size="11.2" fill="#000" stroke="#fff" stroke-width="2.4" stroke-opacity="0.9">Чистополь</text>
<text x="39" y="291" font-size="11.2" fill="#000" stroke="#fff" stroke-width="2.4" stroke-opacity="0.9">Алатырь</text>
<text x="114.7" y="332.6" font-size="11.2" fill="#000" stroke="#fff" stroke-width="2.4" stroke-opacity="0.9">Ульяновск</text>
<text x="0" y="342.3" font-size="11.2" fill="#000" stroke="#fff" stroke-width="2.4" stroke-opacity="0.9">нск</text>
<text x="125" y="421.4" font-size="11.2" fill="#000" stroke="#fff" stroke-width="2.4" stroke-opacity="0.9">Сызрань</text>
<text x="206" y="416.3" font-size="11.2" fill="#000" stroke="#fff" stroke-width="2.4" stroke-opacity="0.9">Самара</text>
<text x="320" y="315.2" font-size="11.2" fill="#000" stroke="#fff" stroke-width="2.4" stroke-opacity="0.9">Бугульма</text>
<text x="381.5" y="350.5" font-size="11.2" fill="#000" stroke="#fff" stroke-width="2.4" stroke-opacity="0.9">Белебей</text>
<text x="358" y="383.2" font-size="11.2" fill="#000" stroke="#fff" stroke-width="2.4" stroke-opacity="0.9">Абдулино</text>
<text x="454.6" y="385.3" font-size="11.2" fill="#000" stroke="#fff" stroke-width="2.4" stroke-opacity="0.9">Стерлита</text>
<text x="474" y="300.9" font-size="11.2" fill="#000" stroke="#fff" stroke-width="2.4" stroke-opacity="0.9">Уфа</text>
<text x="300" y="450.7" font-size="11.2" fill="#000" stroke="#fff" stroke-width="2.4" stroke-opacity="0.9">Бузулук</text>
<text x="334" y="478.3" font-size="11.2" fill="#000" stroke="#fff" stroke-width="2.4" stroke-opacity="0.9">Сорочинск</text>
<text x="320.4" y="20.2" font-size="11.2" fill="#000" stroke="#000" stroke-width="0.12">Глазов</text>
<text x="375" y="110.4" font-size="11.2" fill="#000" stroke="#000" stroke-width="0.12">Воткинск</text>
<text x="341" y="127.8" font-size="11.2" fill="#000" stroke="#000" stroke-width="0.12">Ижевск</text>
<text x="300.5" y="161.6" font-size="11.2" fill="#000" stroke="#000" stroke-width="0.12">Можга</text>
<text x="293" y="212.4" font-size="11.2" fill="#000" stroke="#000" stroke-width="0.12">Набережные</text>
<text x="308" y="222.6" font-size="11.2" fill="#000" stroke="#000" stroke-width="0.12">Челны</text>
<text x="455" y="245.7" font-size="11.2" fill="#000" stroke="#000" stroke-width="0.12">Бирск</text>
<text x="487" y="26.6" font-size="11.2" fill="#000" stroke="#000" stroke-width="0.12">Пе</text>
<text x="87.9" y="146.2" font-size="11.2" fill="#000" stroke="#000" stroke-width="0.12">Йошкар-Ола</text>
<text x="62.3" y="188.3" font-size="11.2" fill="#000" stroke="#000" stroke-width="0.12">Чебоксары</text>
<text x="158.5" y="213" font-size="11.2" fill="#000" stroke="#000" stroke-width="0.12">Казань</text>
<text x="0" y="0" font-size="11.2" fill="#000" stroke="#000" stroke-width="0.12"></text>
<text x="-1" y="237.5" font-size="11.2" fill="#000" stroke="#000" stroke-width="0.12">Сергач</text>
<text x="31" y="240" font-size="11.2" fill="#000" stroke="#000" stroke-width="0.12">Шумерля</text>
<text x="87" y="236.5" font-size="11.2" fill="#000" stroke="#000" stroke-width="0.12">Канаш</text>
<text x="219" y="248.8" font-size="11.2" fill="#000" stroke="#000" stroke-width="0.12">Чистополь</text>
<text x="39" y="291" font-size="11.2" fill="#000" stroke="#000" stroke-width="0.12">Алатырь</text>
<text x="114.7" y="332.6" font-size="11.2" fill="#000" stroke="#000" stroke-width="0.12">Ульяновск</text>
<text x="0" y="342.3" font-size="11.2" fill="#000" stroke="#000" stroke-width="0.12">нск</text>
<text x="125" y="421.4" font-size="11.2" fill="#000" stroke="#000" stroke-width="0.12">Сызрань</text>
<text x="206" y="416.3" font-size="11.2" fill="#000" stroke="#000" stroke-width="0.12">Самара</text>
<text x="320" y="315.2" font-size="11.2" fill="#000" stroke="#000" stroke-width="0.12">Бугульма</text>
<text x="381.5" y="350.5" font-size="11.2" fill="#000" stroke="#000" stroke-width="0.12">Белебей</text>
<text x="358" y="383.2" font-size="11.2" fill="#000" stroke="#000" stroke-width="0.12">Абдулино</text>
<text x="454.6" y="385.3" font-size="11.2" fill="#000" stroke="#000" stroke-width="0.12">Стерлита</text>
<text x="474" y="300.9" font-size="11.2" fill="#000" stroke="#000" stroke-width="0.12">Уфа</text>
<text x="300" y="450.7" font-size="11.2" fill="#000" stroke="#000" stroke-width="0.12">Бузулук</text>
<text x="334" y="478.3" font-size="11.2" fill="#000" stroke="#000" stroke-width="0.12">Сорочинск</text>
<rect x="86.4" y="145" width="326.6" height="200.8" fill="none" stroke="#f04a4a" stroke-opacity="0.8" stroke-width="3.5"/>
<rect x="440" y="11" width="49" height="93" rx="6" fill="#503a55" fill-opacity="0.36"/>
<rect x="445" y="16" width="39" height="39" rx="4" fill="#c4c6dc" fill-opacity="0.6"/>
<rect x="445" y="60" width="39" height="39" rx="4" fill="#c4c6dc" fill-opacity="0.6"/>
<path d="M459.5 35.5h10M464.5 30.5v10" stroke="#000" stroke-width="3"/>
<path d="M460 79.5h9" stroke="#000" stroke-width="3.2"/>
<rect x="7" y="475" width="74" height="12" fill="#fff" fill-opacity="0.6"/>
<path d="M7 475V488H81V475" fill="none" stroke="#000" stroke-width="2"/>
<text x="13" y="485" font-size="10.5" font-weight="bold" fill="#000">100 km</text>
<rect x="352.4" y="450.3" width="137.6" height="34.7" rx="4" fill="#3c3c44" fill-opacity="0.9"/>
<circle cx="371.8" cy="467" r="8.2" fill="#5cb531"/>
<path d="M367.8 467.5l3 3l5.5-6" fill="none" stroke="#fff" stroke-width="2.2" stroke-linecap="round" stroke-linejoin="round"/>
<text x="389.2" y="472.3" font-size="14.5" font-weight="bold" fill="#fff" letter-spacing="0.25">Применить</text>
</svg><!--/MAP--></div>

<div id="sb"></div><div id="thumb"></div>

<div class="tb" style="top:753px;height:64px;border-top:1px solid #dcdcdc"></div>
<div class="btn g" style="left:93px;top:769px;width:197px"><span style="left:35.5px">Сохранить и выйти</span></div>
<div class="btn r" style="left:300px;top:769px;width:111px"><span style="left:36px;letter-spacing:0.4px">Отмена</span></div>
<svg class="abs" style="left:5px;top:769px" width="1262" height="40" viewBox="0 140 1262 40" overflow="visible"><path d="M103.9 154L107.2 156.9L113.9 150.3L116.7 153.2L107.2 162.8L101.1 157Z" fill="#fff" stroke="rgba(40,90,10,.25)" stroke-width="0.6"/><path d="M310.4 151.1L321.6 162.6M321.6 151.1L310.4 162.6" stroke="#fff" stroke-width="4.1"/></svg>
</body></html>
